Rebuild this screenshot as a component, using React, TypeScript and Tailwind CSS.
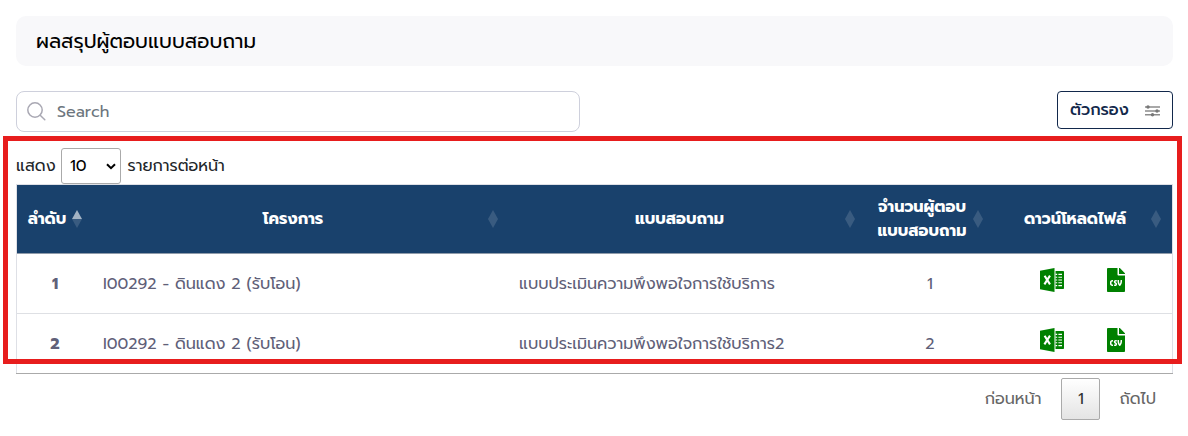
import { ReactNode } from "react";
import { FaFileCsv } from "react-icons/fa";

const COLS = "grid grid-cols-[76px_416px_357px_128px_178px]";

function Label({ children, className = "" }: { children: ReactNode; className?: string }) {
  return <span className={`whitespace-nowrap ${className}`}>{children}</span>;
}

function SortIcon({ active = false }: { active?: boolean }) {
  return (
    <svg width="10" height="18" viewBox="0 0 10 18" className="shrink-0">
      <path d="M5 0L10 9H0Z" fill="#fff" fillOpacity={active ? 0.6 : 0.14} />
      <path d="M5 18L10 9H0Z" fill="#fff" fillOpacity={0.14} />
    </svg>
  );
}

function ExcelIcon() {
  return (
    <svg width="24" height="24" viewBox="0 0 24 24" className="shrink-0">
      <path d="M0 2.8L14.5 0V24L0 21.2Z" fill="#008000" />
      <path d="M15.5 3H23.2Q24 3 24 3.8V20.2Q24 21 23.2 21H15.5Z" fill="#008000" />
      <path d="M4.6 7.8L10 16.4M10 7.6L4.4 16.4" stroke="#fff" strokeWidth="2.1" fill="none" />
      <path d="M15.5 6.4H17.2M18.4 6.4H22M15.5 9.2H17.2M18.4 9.2H22M15.5 12H17.2M18.4 12H22M15.5 14.8H17.2M18.4 14.8H22M15.5 17.6H17.2M18.4 17.6H22" stroke="#fff" strokeWidth="1.1" />
    </svg>
  );
}

function HeadCell({ children, active }: { children: ReactNode; active?: boolean }) {
  return (
    <div className="flex items-center pr-[11px] pl-[10px]">
      <div className="flex min-w-0 flex-1 flex-col items-center pr-[5px]">{children}</div>
      <SortIcon active={active} />
    </div>
  );
}

const rows = [
  { no: "1", project: "I00292 - ดินแดง 2 (รับโอน)", form: "แบบประเมินความพึงพอใจการใช้บริการ", count: "1" },
  { no: "2", project: "I00292 - ดินแดง 2 (รับโอน)", form: "แบบประเมินความพึงพอใจการใช้บริการ2", count: "2" },
];

export default function App() {
  return (
    <div className="relative h-[436px] w-[1188px] overflow-hidden bg-white px-4 pt-4 font-[Prompt,Kanit,'Noto_Sans_Thai','Noto_Sans',sans-serif] text-[16px] leading-6 text-[#212529]">
      <div className="flex h-[50px] w-[1157px] items-center rounded-[10px] bg-[#f8f8fa] pl-5 text-[20px] text-black">
        <Label>ผลสรุปผู้ตอบแบบสอบถาม</Label>
      </div>

      <div className="mt-[25px] flex w-[1157px] items-start justify-between">
        <div className="flex h-[41px] w-[564px] items-center rounded-lg border border-[#ced0dc] pl-[10px] text-[#6c757d]">
          <svg width="19" height="19" viewBox="0 0 19 19" fill="none" stroke="#a9a8b3" strokeWidth="1.5" strokeLinecap="round">
            <circle cx="8" cy="8" r="7.2" />
            <path d="M13.2 13.2L17.8 17.8" />
          </svg>
          <Label className="ml-[11px]">Search</Label>
        </div>
        <div className="flex h-[38px] w-[116px] items-center justify-between rounded border border-[#12284b] pr-3 pl-3 font-medium text-[#12284b]">
          <Label>ตัวกรอง</Label>
          <svg width="15" height="12" viewBox="0 0 15 12" fill="none" stroke="#8c8c8c" strokeWidth="1.5" className="mt-px">
            <path d="M0 2H15M0 6H15M0 9.7H15" />
            <g fill="#777" stroke="none">
              <circle cx="3" cy="2" r="1.7" />
              <circle cx="12" cy="6" r="1.7" />
              <circle cx="7.5" cy="9.7" r="1.7" />
            </g>
          </svg>
        </div>
      </div>

      <div className="mt-4 flex h-9 items-center">
        <Label className="w-[45px]">แสดง</Label>
        <div className="flex h-9 w-[60px] items-center justify-between rounded-[3px] border border-[#aaa] pr-1 pl-2 text-black">
          <Label>10</Label>
          <svg width="10" height="7" viewBox="0 0 10 7" fill="none" stroke="#000" strokeWidth="2">
            <path d="M1 1.2L5 5.2L9 1.2" />
          </svg>
        </div>
        <Label className="ml-[6.5px]">รายการต่อหน้า</Label>
      </div>

      <div className="w-[1157px] border border-b-0 border-[#dee0e6]">
        <div className={`${COLS} h-[68px] bg-[#19416c] font-bold text-white`}>
          <HeadCell active><Label>ลำดับ</Label></HeadCell>
          <HeadCell><Label>โครงการ</Label></HeadCell>
          <HeadCell><Label>แบบสอบถาม</Label></HeadCell>
          <HeadCell><Label>จำนวนผู้ตอบ</Label><Label>แบบสอบถาม</Label></HeadCell>
          <HeadCell><Label>ดาวน์โหลดไฟล์</Label></HeadCell>
        </div>
        {rows.map((r, i) => (
          <div key={r.no} className={`${COLS} h-[60px] items-center text-[#606078] ${i === 0 ? "border-t border-[#8f9baa]" : "border-t border-[#dee0e4]"}`}>
            <Label className="text-center font-bold">{r.no}</Label>
            <Label className="pl-[10px]">{r.project}</Label>
            <Label className="pl-[10px]">{r.form}</Label>
            <Label className="text-center">{r.count}</Label>
            <div className="flex items-center pb-2 pl-[46px]">
              <ExcelIcon />
              <FaFileCsv size={24} color="#008000" className="ml-10" />
            </div>
          </div>
        ))}
      </div>
      <div className="h-px w-[1157px] bg-[#aaaaaa]" />

      <div className="mt-1 flex h-[42px] w-[1157px] items-center justify-end pr-[17px] text-[#666]">
        <Label>ก่อนหน้า</Label>
        <div className="mr-[19px] ml-5 flex h-[42px] w-[39px] items-center justify-center rounded-[2px] border border-[#aaa] bg-linear-to-b from-white to-[#e4e4e4] text-[#333]">1</div>
        <Label>ถัดไป</Label>
      </div>

      <div className="pointer-events-none absolute top-[136px] left-[3px] h-[228px] w-[1179px] border-[5px] border-[#e71d1d]" />
    </div>
  );
}
